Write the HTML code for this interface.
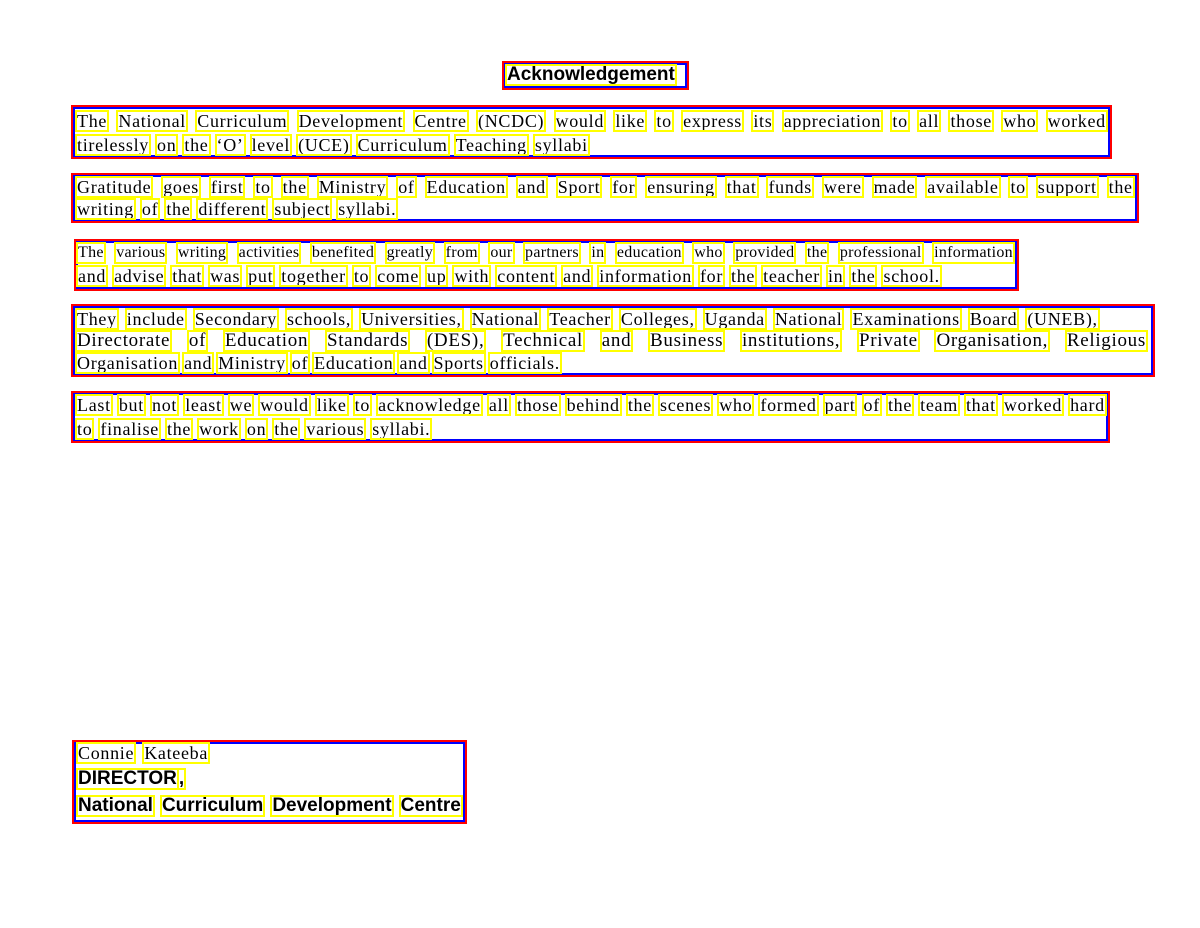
<!DOCTYPE html>
<html><head><meta charset="utf-8"><style>
body{margin:0;width:1200px;height:928px;background:#fff;position:relative;font-family:"Liberation Serif",serif;color:#000;overflow:hidden}
.b{position:absolute;border:2px solid #f00;box-sizing:border-box}
.b>i{position:absolute;inset:0;border:2px solid #00f}
.l{position:absolute;display:flex;justify-content:space-between;font-size:18px;letter-spacing:0.7px;line-height:20px;white-space:nowrap}
.l.g{justify-content:flex-start;gap:6px}
.l span{outline:2px solid #ff0;outline-offset:-1px;padding:0 1px}
.s{font-family:"Liberation Sans",sans-serif;font-weight:bold;letter-spacing:0}
</style></head><body>

<div class="b" style="left:502px;top:61px;width:187px;height:29px"><i></i></div>
<div class="l g s" style="left:506px;top:65px;font-size:19px"><span>Acknowledgement</span></div>

<div class="b" style="left:71px;top:105px;width:1041px;height:54px"><i></i></div>
<div class="l" style="left:76px;top:111px;width:1031px"><span>The</span><span>National</span><span>Curriculum</span><span>Development</span><span>Centre</span><span>(NCDC)</span><span>would</span><span>like</span><span>to</span><span>express</span><span>its</span><span>appreciation</span><span>to</span><span>all</span><span>those</span><span>who</span><span>worked</span></div>
<div class="l g" style="left:76px;top:135px"><span>tirelessly</span><span>on</span><span>the</span><span>‘O’</span><span>level</span><span>(UCE)</span><span>Curriculum</span><span>Teaching</span><span>syllabi</span></div>

<div class="b" style="left:71px;top:173px;width:1068px;height:50px"><i></i></div>
<div class="l" style="left:76px;top:177px;width:1058px"><span>Gratitude</span><span>goes</span><span>first</span><span>to</span><span>the</span><span>Ministry</span><span>of</span><span>Education</span><span>and</span><span>Sport</span><span>for</span><span>ensuring</span><span>that</span><span>funds</span><span>were</span><span>made</span><span>available</span><span>to</span><span>support</span><span>the</span></div>
<div class="l g" style="left:76px;top:199px"><span>writing</span><span>of</span><span>the</span><span>different</span><span>subject</span><span>syllabi.</span></div>

<div class="b" style="left:74px;top:239px;width:945px;height:52px"><i></i></div>
<div class="l" style="left:77px;top:243px;width:937px;font-size:16px;letter-spacing:0.3px"><span>The</span><span>various</span><span>writing</span><span>activities</span><span>benefited</span><span>greatly</span><span>from</span><span>our</span><span>partners</span><span>in</span><span>education</span><span>who</span><span>provided</span><span>the</span><span>professional</span><span>information</span></div>
<div class="l g" style="left:77px;top:266px"><span>and</span><span>advise</span><span>that</span><span>was</span><span>put</span><span>together</span><span>to</span><span>come</span><span>up</span><span>with</span><span>content</span><span>and</span><span>information</span><span>for</span><span>the</span><span>teacher</span><span>in</span><span>the</span><span>school.</span></div>

<div class="b" style="left:71px;top:304px;width:1084px;height:73px"><i></i></div>
<div class="l g" style="left:76px;top:309px;gap:8px"><span>They</span><span>include</span><span>Secondary</span><span>schools,</span><span>Universities,</span><span>National</span><span>Teacher</span><span>Colleges,</span><span>Uganda</span><span>National</span><span>Examinations</span><span>Board</span><span>(UNEB),</span></div>
<div class="l" style="left:76px;top:331px;width:1071px;font-size:19px"><span>Directorate</span><span>of</span><span>Education</span><span>Standards</span><span>(DES),</span><span>Technical</span><span>and</span><span>Business</span><span>institutions,</span><span>Private</span><span>Organisation,</span><span>Religious</span></div>
<div class="l g" style="left:76px;top:353px;gap:4px"><span>Organisation</span><span>and</span><span>Ministry</span><span>of</span><span>Education</span><span>and</span><span>Sports</span><span>officials.</span></div>

<div class="b" style="left:71px;top:391px;width:1039px;height:52px"><i></i></div>
<div class="l" style="left:76px;top:395px;width:1030px"><span>Last</span><span>but</span><span>not</span><span>least</span><span>we</span><span>would</span><span>like</span><span>to</span><span>acknowledge</span><span>all</span><span>those</span><span>behind</span><span>the</span><span>scenes</span><span>who</span><span>formed</span><span>part</span><span>of</span><span>the</span><span>team</span><span>that</span><span>worked</span><span>hard</span></div>
<div class="l g" style="left:76px;top:419px"><span>to</span><span>finalise</span><span>the</span><span>work</span><span>on</span><span>the</span><span>various</span><span>syllabi.</span></div>

<div class="b" style="left:72px;top:740px;width:395px;height:84px"><i></i></div>
<div class="l g" style="left:77px;top:743px;gap:8px"><span>Connie</span><span>Kateeba</span></div>
<div class="l g s" style="left:77px;top:769px;gap:0;font-size:19px"><span>DIRECTOR</span><span>,</span></div>
<div class="l g s" style="left:77px;top:796px;gap:7px;font-size:19px"><span>National</span><span>Curriculum</span><span>Development</span><span>Centre</span></div>

</body></html>
